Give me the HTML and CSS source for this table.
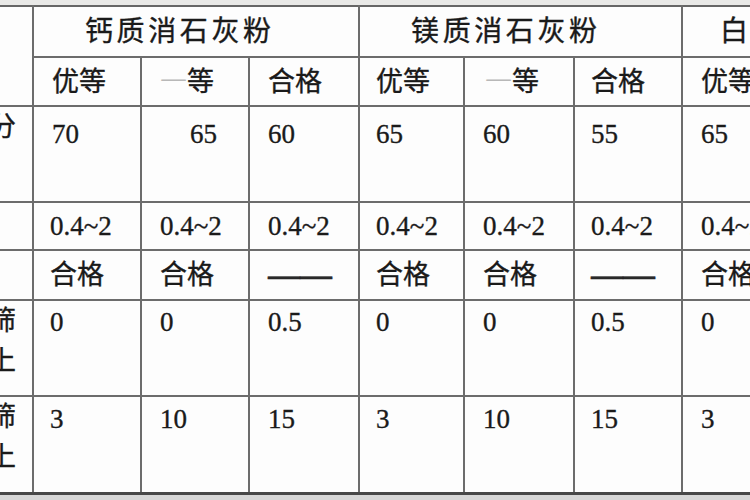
FILE: index.html
```html
<!DOCTYPE html>
<html lang="zh">
<head>
<meta charset="utf-8">
<link rel="stylesheet" href="styles.css">
</head>
<body>
<div class="page">
<table class="spec">
  <colgroup>
    <col class="c0"><col class="c1"><col class="c2"><col class="c3"><col class="c4"><col class="c5"><col class="c6"><col class="c7">
  </colgroup>
  <tr class="r1">
    <td class="lead" rowspan="2"></td>
    <td class="group" colspan="3">钙质消石灰粉</td>
    <td class="group" colspan="3">镁质消石灰粉</td>
    <td class="group last-group">白</td>
  </tr>
  <tr class="r2">
    <td>优等</td><td><span class="faint">一</span>等</td><td>合格</td>
    <td class="tight">优等</td><td class="wide"><span class="faint">一</span>等</td><td class="tight">合格</td>
    <td>优等</td>
  </tr>
  <tr class="r3">
    <td class="lead"><div class="cut"><span>CaO+MgO成分</span></div></td>
    <td>70</td><td class="shift">65</td><td>60</td>
    <td class="tight">65</td><td>60</td><td class="tight">55</td>
    <td>65</td>
  </tr>
  <tr class="r4">
    <td class="lead"></td>
    <td class="num-l">0.4~2</td><td>0.4~2</td><td>0.4~2</td>
    <td class="tight">0.4~2</td><td>0.4~2</td><td class="tight">0.4~2</td>
    <td>0.4~2</td>
  </tr>
  <tr class="r5">
    <td class="lead"></td>
    <td class="num-l">合格</td><td>合格</td><td><span class="dash">——</span></td>
    <td class="tight">合格</td><td>合格</td><td class="tight"><span class="dash">——</span></td>
    <td>合格</td>
  </tr>
  <tr class="r6">
    <td class="lead"><div class="cut two"><span>0.90mm筛</span><span>筛余量以上</span></div></td>
    <td class="num-l">0</td><td>0</td><td>0.5</td>
    <td class="tight">0</td><td>0</td><td class="tight">0.5</td>
    <td>0</td>
  </tr>
  <tr class="r7">
    <td class="lead"><div class="cut two"><span>0.125mm筛</span><span>筛余量以上</span></div></td>
    <td class="num-l">3</td><td>10</td><td>15</td>
    <td class="tight">3</td><td>10</td><td class="tight">15</td>
    <td>3</td>
  </tr>
</table>
</div>
</body>
</html>
```

FILE: styles.css
```css
html, body {
  margin: 0;
  padding: 0;
  width: 750px;
  height: 500px;
  overflow: hidden;
  background: #d6d6d6;
}

.page {
  padding-top: 5px;
  background: linear-gradient(#e9e9e7 0, #e9e9e7 5px, #fdfdfd 5px);
  width: 750px;
}

.spec {
  border-collapse: collapse;
  table-layout: fixed;
  width: 883px;
  background: #fdfdfd;
  font-family: "Liberation Serif", "Noto Sans CJK SC", serif;
  font-size: 27px;
  color: #1a1a1a;
  -webkit-text-stroke: 0.35px #1a1a1a;
  border-bottom: 3px solid #474747;
}

.c0 { width: 33px; }
.c1 { width: 108px; }
.c2 { width: 108px; }
.c3 { width: 110px; }
.c4 { width: 105px; }
.c5 { width: 110px; }
.c6 { width: 108px; }
.c7 { width: 201px; }

.spec td {
  border: 2px solid #6c6c6c;
  padding: 0 0 0 18px;
  line-height: 32px;
  white-space: nowrap;
  vertical-align: middle;
}

.spec td.lead {
  border-left: none;
  padding: 0;
  vertical-align: top;
}

.spec tr.r1 td { border-top: 2px solid #666666; }
.spec tr.r7 td { border-bottom: 3px solid #474747; }

.r1 { height: 51px; }
.r2 { height: 49px; }
.r3 { height: 96px; }
.r4 { height: 48px; }
.r5 { height: 50px; }
.r6 { height: 96px; }
.r7 { height: 97px; }

.spec td.group {
  padding-left: 51px;
  font-size: 28px;
  letter-spacing: 3.6px;
}

.spec td.last-group { padding-left: 37px; }

.spec td.tight { padding-left: 16px; }
.spec td.wide { padding-left: 20px; }
.spec td.num-l { padding-left: 16px; }

.r3 td, .r6 td, .r7 td { vertical-align: top; }
.r3 td { padding-top: 11px; }
.r6 td { padding-top: 5px; }
.r7 td { padding-top: 6px; }

.spec td.shift { padding-left: 48px; }

.faint {
  color: #b8b8b8;
  -webkit-text-stroke: 0;
  font-weight: 300;
}

.dash {
  font-family: "Liberation Serif", serif;
  font-size: 32px;
  font-weight: bold;
  color: #2a2a2a;
}

.cut {
  display: flex;
  flex-direction: column;
  align-items: flex-end;
  width: 16px;
  line-height: 40px;
}

.cut span { white-space: nowrap; }
```
